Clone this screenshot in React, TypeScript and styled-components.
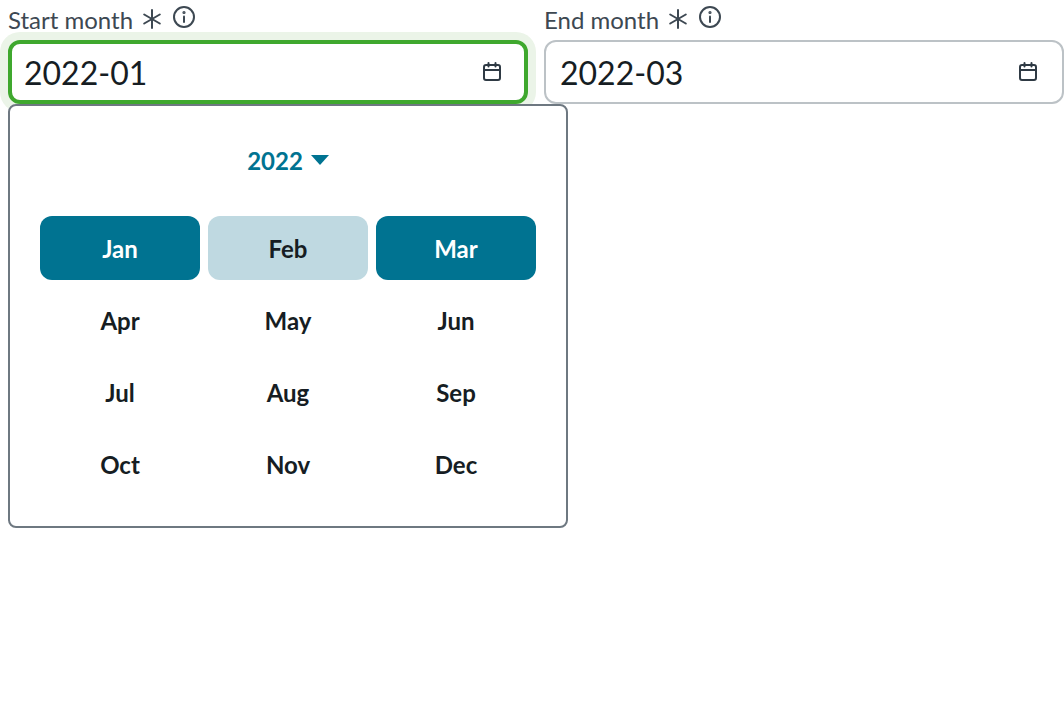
import React from "react";
import styled, { createGlobalStyle } from "styled-components";

const Global = createGlobalStyle`
  html, body { margin: 0; padding: 0; background: #fff; }
  body { font-family: Lato, "Noto Sans", sans-serif; color: #161d23; }
`;

const Page = styled.div`
  display: flex;
  gap: 16px;
  padding: 0 0 0 8px;
  width: 1064px;
  height: 725px;
  box-sizing: border-box;
  overflow: hidden;
`;

const Field = styled.div`
  position: relative;
  width: 520px;
  flex: none;
`;

const LabelRow = styled.div`
  display: flex;
  align-items: flex-start;
  height: 40px;
  color: #3d4852;
  font-size: 24px;
  line-height: 40px;
`;

const LabelText = styled.span`
  margin-top: 0;
`;

const Asterisk = styled.svg`
  width: 22px;
  height: 22px;
  margin: 8px 0 0 8px;
`;

const Info = styled.svg`
  width: 24px;
  height: 24px;
  margin: 5px 0 0 9px;
`;

const InputBox = styled.div<{ $focused?: boolean }>`
  box-sizing: border-box;
  height: 64px;
  display: flex;
  align-items: center;
  justify-content: space-between;
  border-radius: 12px;
  background: #fff;
  border: ${(p) => (p.$focused ? "4px solid #3fa82e" : "2px solid #bcc2c6")};
  padding: ${(p) => (p.$focused ? "0 20px 0 12px" : "0 22px 0 14px")};
  box-shadow: ${(p) => (p.$focused ? "0 0 0 8px #ebf4e8" : "none")};
  font-size: 32px;
  color: #161d23;
`;

const CalendarIcon = styled.svg`
  width: 24px;
  height: 24px;
  display: block;
`;

const Popover = styled.div`
  position: absolute;
  top: 104px;
  left: 0;
  width: 560px;
  height: 424px;
  box-sizing: border-box;
  background: #fff;
  border: 2px solid #6e7881;
  border-radius: 8px;
  padding: 30px 30px;
  z-index: 2;
`;

const YearHeader = styled.div`
  display: flex;
  align-items: center;
  justify-content: center;
  gap: 8px;
  height: 48px;
  margin-bottom: 32px;
  color: #007391;
  font-size: 24px;
  font-weight: 700;
`;

const Caret = styled.svg`
  width: 18px;
  height: 10px;
`;

const MonthGrid = styled.div`
  display: grid;
  grid-template-columns: repeat(3, 160px);
  grid-auto-rows: 64px;
  gap: 8px;
`;

const Month = styled.div<{ $state?: "selected" | "range" }>`
  display: flex;
  align-items: center;
  justify-content: center;
  border-radius: 12px;
  font-size: 24px;
  font-weight: 700;
  background: ${(p) => (p.$state === "selected" ? "#007391" : p.$state === "range" ? "#bfd9e1" : "transparent")};
  color: ${(p) => (p.$state === "selected" ? "#fff" : "#161d23")};
`;

const Calendar = () => (
  <CalendarIcon viewBox="0 0 24 24" fill="none" stroke="#2f3a44" strokeWidth="2" strokeLinecap="round" strokeLinejoin="round">
    <rect x="4" y="5" width="16" height="15" rx="2" />
    <path d="M4 10h16M8.5 3v3.5M15.5 3v3.5" />
  </CalendarIcon>
);

const Label = ({ text }: { text: string }) => (
  <LabelRow>
    <LabelText>{text}</LabelText>
    <Asterisk viewBox="0 0 22 22" fill="none" stroke="#3d4852" strokeWidth="2" strokeLinecap="round">
      <path d="M11 2v18M3.2 6.5l15.6 9M18.8 6.5l-15.6 9" />
    </Asterisk>
    <Info viewBox="0 0 24 24" fill="none" stroke="#3d4852" strokeWidth="2" strokeLinecap="round">
      <circle cx="12" cy="12" r="10" />
      <path d="M12 11.5v5.5" />
      <circle cx="12" cy="7.5" r="0.6" fill="#3d4852" />
    </Info>
  </LabelRow>
);

const months: { name: string; state?: "selected" | "range" }[] = [
  { name: "Jan", state: "selected" },
  { name: "Feb", state: "range" },
  { name: "Mar", state: "selected" },
  { name: "Apr" },
  { name: "May" },
  { name: "Jun" },
  { name: "Jul" },
  { name: "Aug" },
  { name: "Sep" },
  { name: "Oct" },
  { name: "Nov" },
  { name: "Dec" },
];

export default function App() {
  return (
    <>
      <Global />
      <Page>
        <Field>
          <Label text="Start month" />
          <InputBox $focused>
            <span>2022-01</span>
            <Calendar />
          </InputBox>
          <Popover>
            <YearHeader>
              <span>2022</span>
              <Caret viewBox="0 0 18 10">
                <path d="M0 0h18L9 10z" fill="#007391" />
              </Caret>
            </YearHeader>
            <MonthGrid>
              {months.map((m) => (
                <Month key={m.name} $state={m.state}>
                  {m.name}
                </Month>
              ))}
            </MonthGrid>
          </Popover>
        </Field>
        <Field>
          <Label text="End month" />
          <InputBox>
            <span>2022-03</span>
            <Calendar />
          </InputBox>
        </Field>
      </Page>
    </>
  );
}
